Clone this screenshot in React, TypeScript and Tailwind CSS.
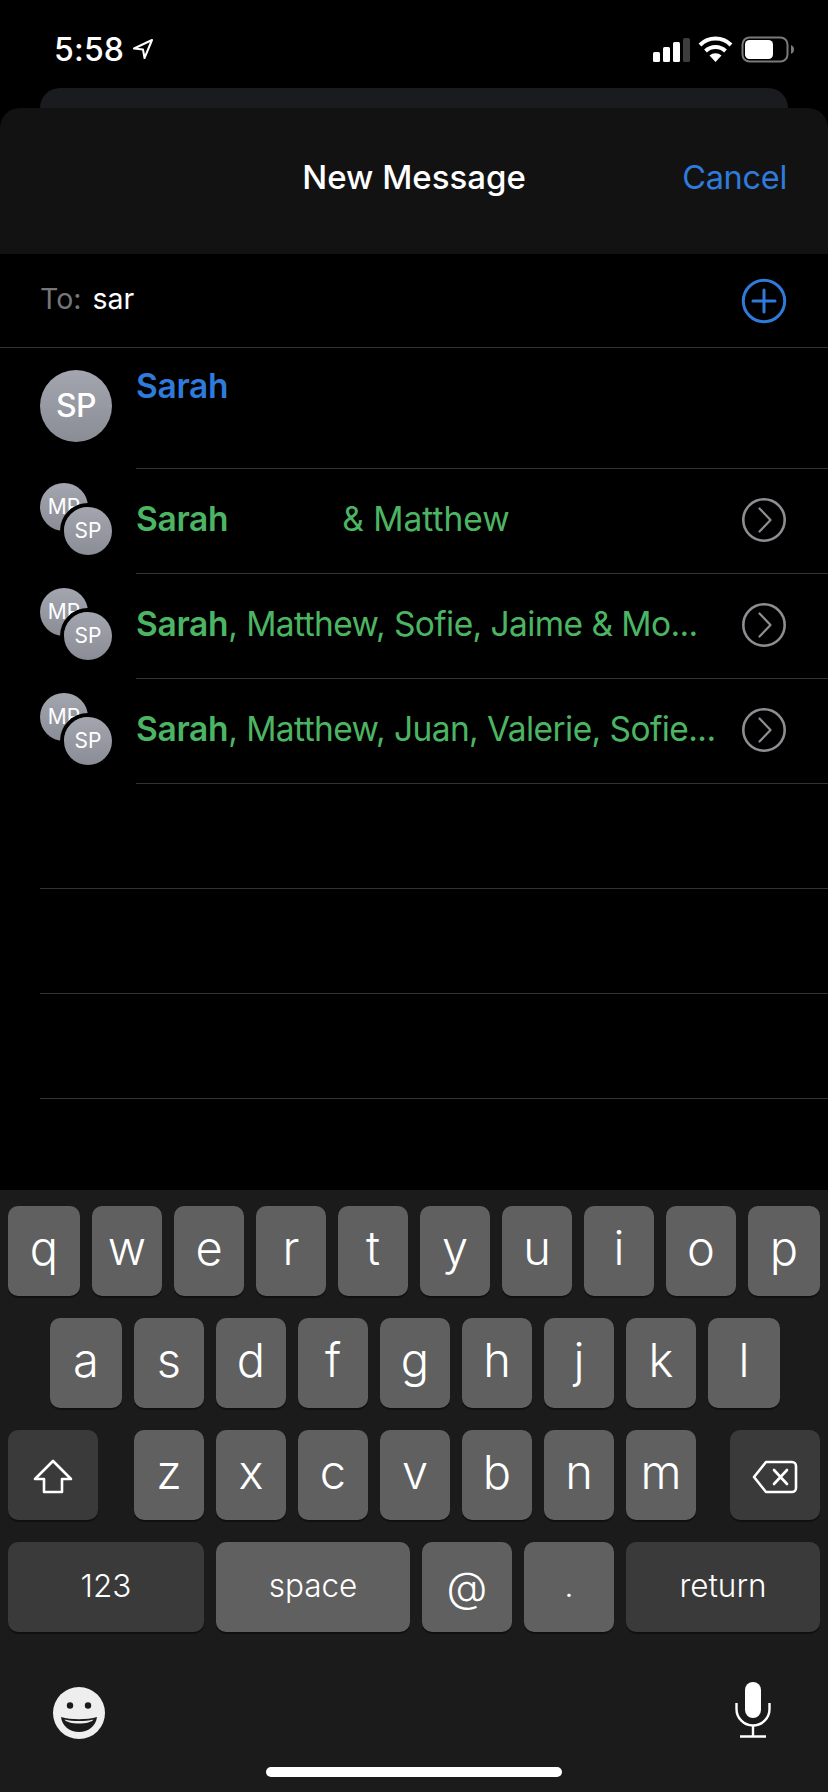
import React from "react";

function Avatar({ text, big }: { text: string; big?: boolean }) {
  return (
    <div className={`flex items-center justify-center rounded-full bg-gradient-to-b from-[#a3a5af] to-[#8b8d96] text-white ${big ? "h-[72px] w-[72px] text-[32px] font-medium tracking-[-0.5px]" : "h-[48px] w-[48px] text-[21px]"}`}>
      {text}
    </div>
  );
}

function Stack() {
  return (
    <div className="relative h-[76px] w-[76px] overflow-hidden">
      <Avatar text="MP" />
      <div className="absolute left-[20px] top-[20px] rounded-full border-4 border-black">
        <Avatar text="SP" />
      </div>
    </div>
  );
}

function Chevron() {
  return (
    <svg width="46" height="46" viewBox="0 0 46 46" fill="none" stroke="#8d8d92" strokeWidth="2.6" className="-mt-[3px] shrink-0">
      <circle cx="23" cy="23" r="20.7" />
      <path d="M18.5 11.5 L29.5 23 L18.5 34.5" strokeWidth="2.2" strokeLinecap="round" strokeLinejoin="round" />
    </svg>
  );
}

function GroupRow({ rest, gapped }: { rest: string; gapped?: boolean }) {
  return (
    <div className="flex h-[105px] shrink-0 pl-10">
      <div className="w-[96px] shrink-0 pt-[14px]">
        <Stack />
      </div>
      <div className="flex min-w-0 flex-1 items-center border-b border-[#333335] pr-[41px]">
        <div className="flex-1 whitespace-nowrap pb-[3px] text-[33.5px] tracking-[-0.58px] text-[#4cb564]">
          <span className="font-semibold tracking-[-0.3px]">Sarah</span>
          {gapped ? <span className="ml-[114px] tracking-[0px]">{rest}</span> : rest}
        </div>
        <Chevron />
      </div>
    </div>
  );
}

function Key({ label, w, dark, small, children }: { label?: string; w: string; dark?: boolean; small?: boolean; children?: React.ReactNode }) {
  return (
    <div className={`flex h-[90px] shrink-0 items-center justify-center rounded-[10px] text-white shadow-[0_2px_0_#101010] ${w} ${dark ? "bg-[#3a3a3a]" : "bg-[#606060]"} ${small ? "pb-[2px] text-[31.5px] font-light" : "pb-[6px] text-[47px] font-light"}`}>
      {label}
      {children}
    </div>
  );
}

function EmptyRow() {
  return <div className="ml-10 h-[105px] shrink-0 border-b border-[#333335]" />;
}

export default function App() {
  const row1 = ["w", "e", "r", "t", "y", "u", "i", "o"];
  const row2 = ["s", "d", "f", "g", "h", "j", "k"];
  const row3 = ["z", "x", "c", "v", "b", "n", "m"];
  return (
    <div className="flex h-[1792px] w-[828px] flex-col overflow-hidden bg-black font-[Inter,sans-serif] text-white">
      {/* status bar */}
      <div className="flex h-[88px] shrink-0 justify-between pl-[54px] pr-[34px]">
        <div className="flex items-center gap-[8px] pt-[12px]">
          <span className="text-[32px] font-medium tracking-[0.2px]">5:58</span>
          <svg width="22" height="22" viewBox="0 0 22 22" fill="none" stroke="white" strokeWidth="2" strokeLinejoin="round" className="-mt-[2px]">
            <path d="M20 2 L2 10.5 L11 11.5 L12.5 20 Z" />
          </svg>
        </div>
        <svg width="142" height="88" viewBox="652 0 142 88">
          <rect x="653" y="52" width="7" height="10" rx="1.5" fill="#fff" />
          <rect x="663" y="47" width="7" height="15" rx="1.5" fill="#fff" />
          <rect x="673" y="42" width="7" height="20" rx="1.5" fill="#fff" />
          <rect x="683" y="38" width="7" height="24" rx="1.5" fill="#3d3d3d" />
          <path d="M700 46 A22 22 0 0 1 731 46" fill="none" stroke="#fff" strokeWidth="4" transform="translate(0 -1)" />
          <path d="M705.5 51 A14.5 14.5 0 0 1 725.5 51" fill="none" stroke="#fff" strokeWidth="4" />
          <path d="M715.5 62 L709.5 55.5 A9 9 0 0 1 721.5 55.5 Z" fill="#fff" />
          <rect x="742.5" y="37.5" width="45" height="24" rx="7" fill="none" stroke="#7a7a7a" strokeWidth="2" />
          <rect x="745" y="40" width="28" height="19" rx="4.5" fill="#fff" />
          <path d="M791 45 C793.5 46 794 48 794 49.5 C794 51 793.5 53 791 54 Z" fill="#7a7a7a" />
        </svg>
      </div>

      {/* card behind */}
      <div className="mx-10 h-5 shrink-0 rounded-t-[20px] bg-[#1a1b1f]" />

      {/* header */}
      <div className="relative flex h-[146px] shrink-0 items-center justify-center rounded-t-[20px] bg-[#121213] pb-[6px]">
        <span className="text-[33px] font-medium">New Message</span>
        <span className="absolute right-[41px] text-[32.5px] tracking-[-0.3px] text-[#2f7bdc]">Cancel</span>
      </div>

      {/* To row */}
      <div className="flex h-[94px] shrink-0 items-center justify-between border-b border-[#333335] pl-[40px] pr-[41px]">
        <div className="flex items-center gap-[11px] pb-[3px] text-[28.5px]">
          <span className="text-[#767678]">To:</span>
          <span>sar</span>
        </div>
        <svg width="46" height="46" viewBox="0 0 46 46" fill="none" stroke="#2f7bdc" strokeWidth="3">
          <circle cx="23" cy="23" r="20.7" />
          <path d="M23 12 V34 M12 23 H34" strokeLinecap="round" />
        </svg>
      </div>

      {/* list */}
      <div className="flex h-[121px] shrink-0 pl-10">
        <div className="w-[96px] shrink-0 pt-[22px]">
          <Avatar text="SP" big />
        </div>
        <div className="flex-1 border-b border-[#333335] pt-[13px]">
          <span className="text-[33.5px] font-semibold tracking-[-0.3px] text-[#2f7bdc]">Sarah</span>
        </div>
      </div>
      <GroupRow rest="& Matthew" gapped />
      <GroupRow rest=", Matthew, Sofie, Jaime & Mo..." />
      <GroupRow rest=", Matthew, Juan, Valerie, Sofie..." />
      <EmptyRow />
      <EmptyRow />
      <EmptyRow />
      <div className="flex-1" />

      {/* keyboard */}
      <div className="flex h-[602px] shrink-0 flex-col bg-[#1b1b1b] pt-4">
        <div className="flex flex-col gap-[22px] pl-2 pr-2">
          <div className="flex gap-3">
            <Key label="q" w="w-[72px]" />
            {row1.map((k) => (
              <Key key={k} label={k} w="w-[70px]" />
            ))}
            <Key label="p" w="w-[72px]" />
          </div>
          <div className="flex gap-3 pl-[42px]">
            <Key label="a" w="w-[72px]" />
            {row2.map((k) => (
              <Key key={k} label={k} w="w-[70px]" />
            ))}
            <Key label="l" w="w-[72px]" />
          </div>
          <div className="flex gap-3">
            <Key w="w-[90px]" dark>
              <svg width="40" height="36" viewBox="0 0 40 36" fill="none" stroke="#fff" strokeWidth="2.6" strokeLinejoin="round" className="mt-[10px]">
                <path d="M20 2 L38 20 H29 V33 H11 V20 H2 Z" />
              </svg>
            </Key>
            <div className="w-3 shrink-0" />
            {row3.map((k) => (
              <Key key={k} label={k} w="w-[70px]" />
            ))}
            <div className="w-[10px] shrink-0" />
            <Key w="w-[90px]" dark>
              <svg width="46" height="34" viewBox="0 0 46 34" fill="none" stroke="#fff" strokeWidth="2.6" strokeLinejoin="round" className="mt-[10px]">
                <path d="M14 2 H40 A4 4 0 0 1 44 6 V28 A4 4 0 0 1 40 32 H14 L2 17 Z" />
                <path d="M22 10 L35 24 M35 10 L22 24" strokeLinecap="round" />
              </svg>
            </Key>
          </div>
          <div className="flex gap-3">
            <Key label="123" w="w-[196px]" dark small />
            <Key label="space" w="w-[194px]" small />
            <Key w="w-[90px]" small>
              <span className="text-[42px]">@</span>
            </Key>
            <Key label="." w="w-[90px]" small />
            <Key label="return" w="w-[194px]" dark small />
          </div>
        </div>
        <div className="flex items-start justify-between pl-[53px] pr-[57px] pt-[55px]">
          <svg width="52" height="52" viewBox="0 0 52 52">
            <circle cx="26" cy="26" r="26" fill="#eeeeee" />
            <circle cx="17" cy="18.5" r="3.2" fill="#1b1b1b" />
            <circle cx="35" cy="18.5" r="3.2" fill="#1b1b1b" />
            <path d="M8 30 C18 33 34 33 44 30 C43 39 35 45 26 45 C17 45 9 39 8 30 Z" fill="#1b1b1b" />
            <path d="M11.5 32.5 C20 34.5 32 34.5 40.5 32.5 C39 35 33 36.5 26 36.5 C19 36.5 13 35 11.5 32.5 Z" fill="#eeeeee" />
          </svg>
          <svg width="36" height="56" viewBox="0 0 36 56" fill="none" stroke="#fff" strokeWidth="2.4" className="-mt-[5px]">
            <rect x="10" y="0" width="16" height="36" rx="8" fill="#fff" stroke="none" />
            <path d="M1.5 21 V27 A16.5 16.5 0 0 0 34.5 27 V21" />
            <path d="M18 44 V54 M5 54.5 H31" />
          </svg>
        </div>
        <div className="mt-[28px] flex justify-center">
          <div className="h-[10px] w-[296px] rounded-full bg-white" />
        </div>
      </div>
    </div>
  );
}
